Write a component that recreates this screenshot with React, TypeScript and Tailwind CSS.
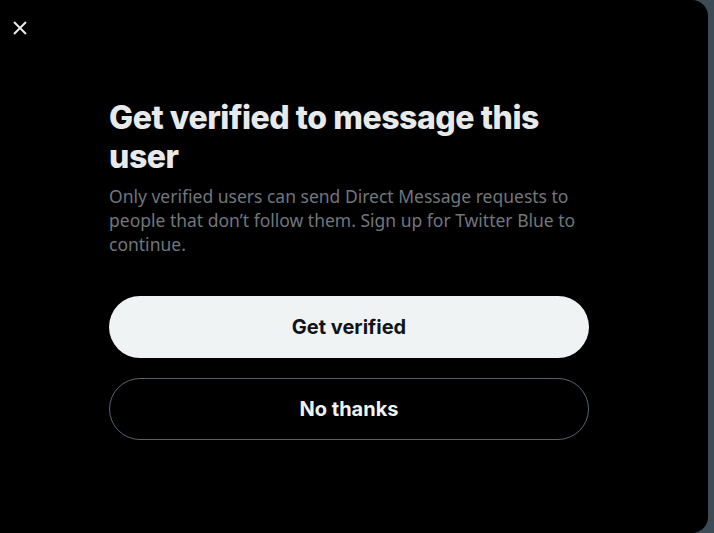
export default function App() {
  return (
    <div className="flex h-[533px] w-[714px] overflow-hidden bg-[#3d4b57]">
      <div className="flex h-[533px] w-[708px] flex-col rounded-r-2xl bg-black">
        <div className="flex h-[56px] items-start pl-[13px] pt-[21px]">
          <button className="flex h-[14px] w-[14px] items-center justify-center text-[#e7e9ea]">
            <svg viewBox="0 0 14 14" className="h-[14px] w-[14px]" fill="none" stroke="currentColor" strokeWidth="2" strokeLinecap="butt">
              <path d="M1 1L13 13M13 1L1 13" />
            </svg>
          </button>
        </div>
        <div className="mt-[42px] w-[480px] self-start pl-[109px] box-content">
          <h1 className="font-['Inter',sans-serif] text-[32px] font-extrabold leading-[39px] tracking-[-0.45px] text-[#e7e9ea]">
            Get verified to message this user
          </h1>
          <p className="mt-[8px] font-['Noto_Sans',sans-serif] text-[17.5px] leading-[24px] text-[#71767b]">
            Only verified users can send Direct Message requests to people that don’t follow them. Sign up for Twitter Blue to continue.
          </p>
          <div className="mt-[40px] flex flex-col gap-[20px]">
            <button className="flex h-[62px] w-[480px] items-center justify-center rounded-full bg-[#eff3f4] font-['Inter',sans-serif] text-[20px] font-bold text-[#0f1419]">
              Get verified
            </button>
            <button className="flex h-[62px] w-[480px] items-center justify-center rounded-full border border-[#536471] font-['Inter',sans-serif] text-[20px] font-bold text-[#eff3f4]">
              No thanks
            </button>
          </div>
        </div>
      </div>
    </div>
  );
}
